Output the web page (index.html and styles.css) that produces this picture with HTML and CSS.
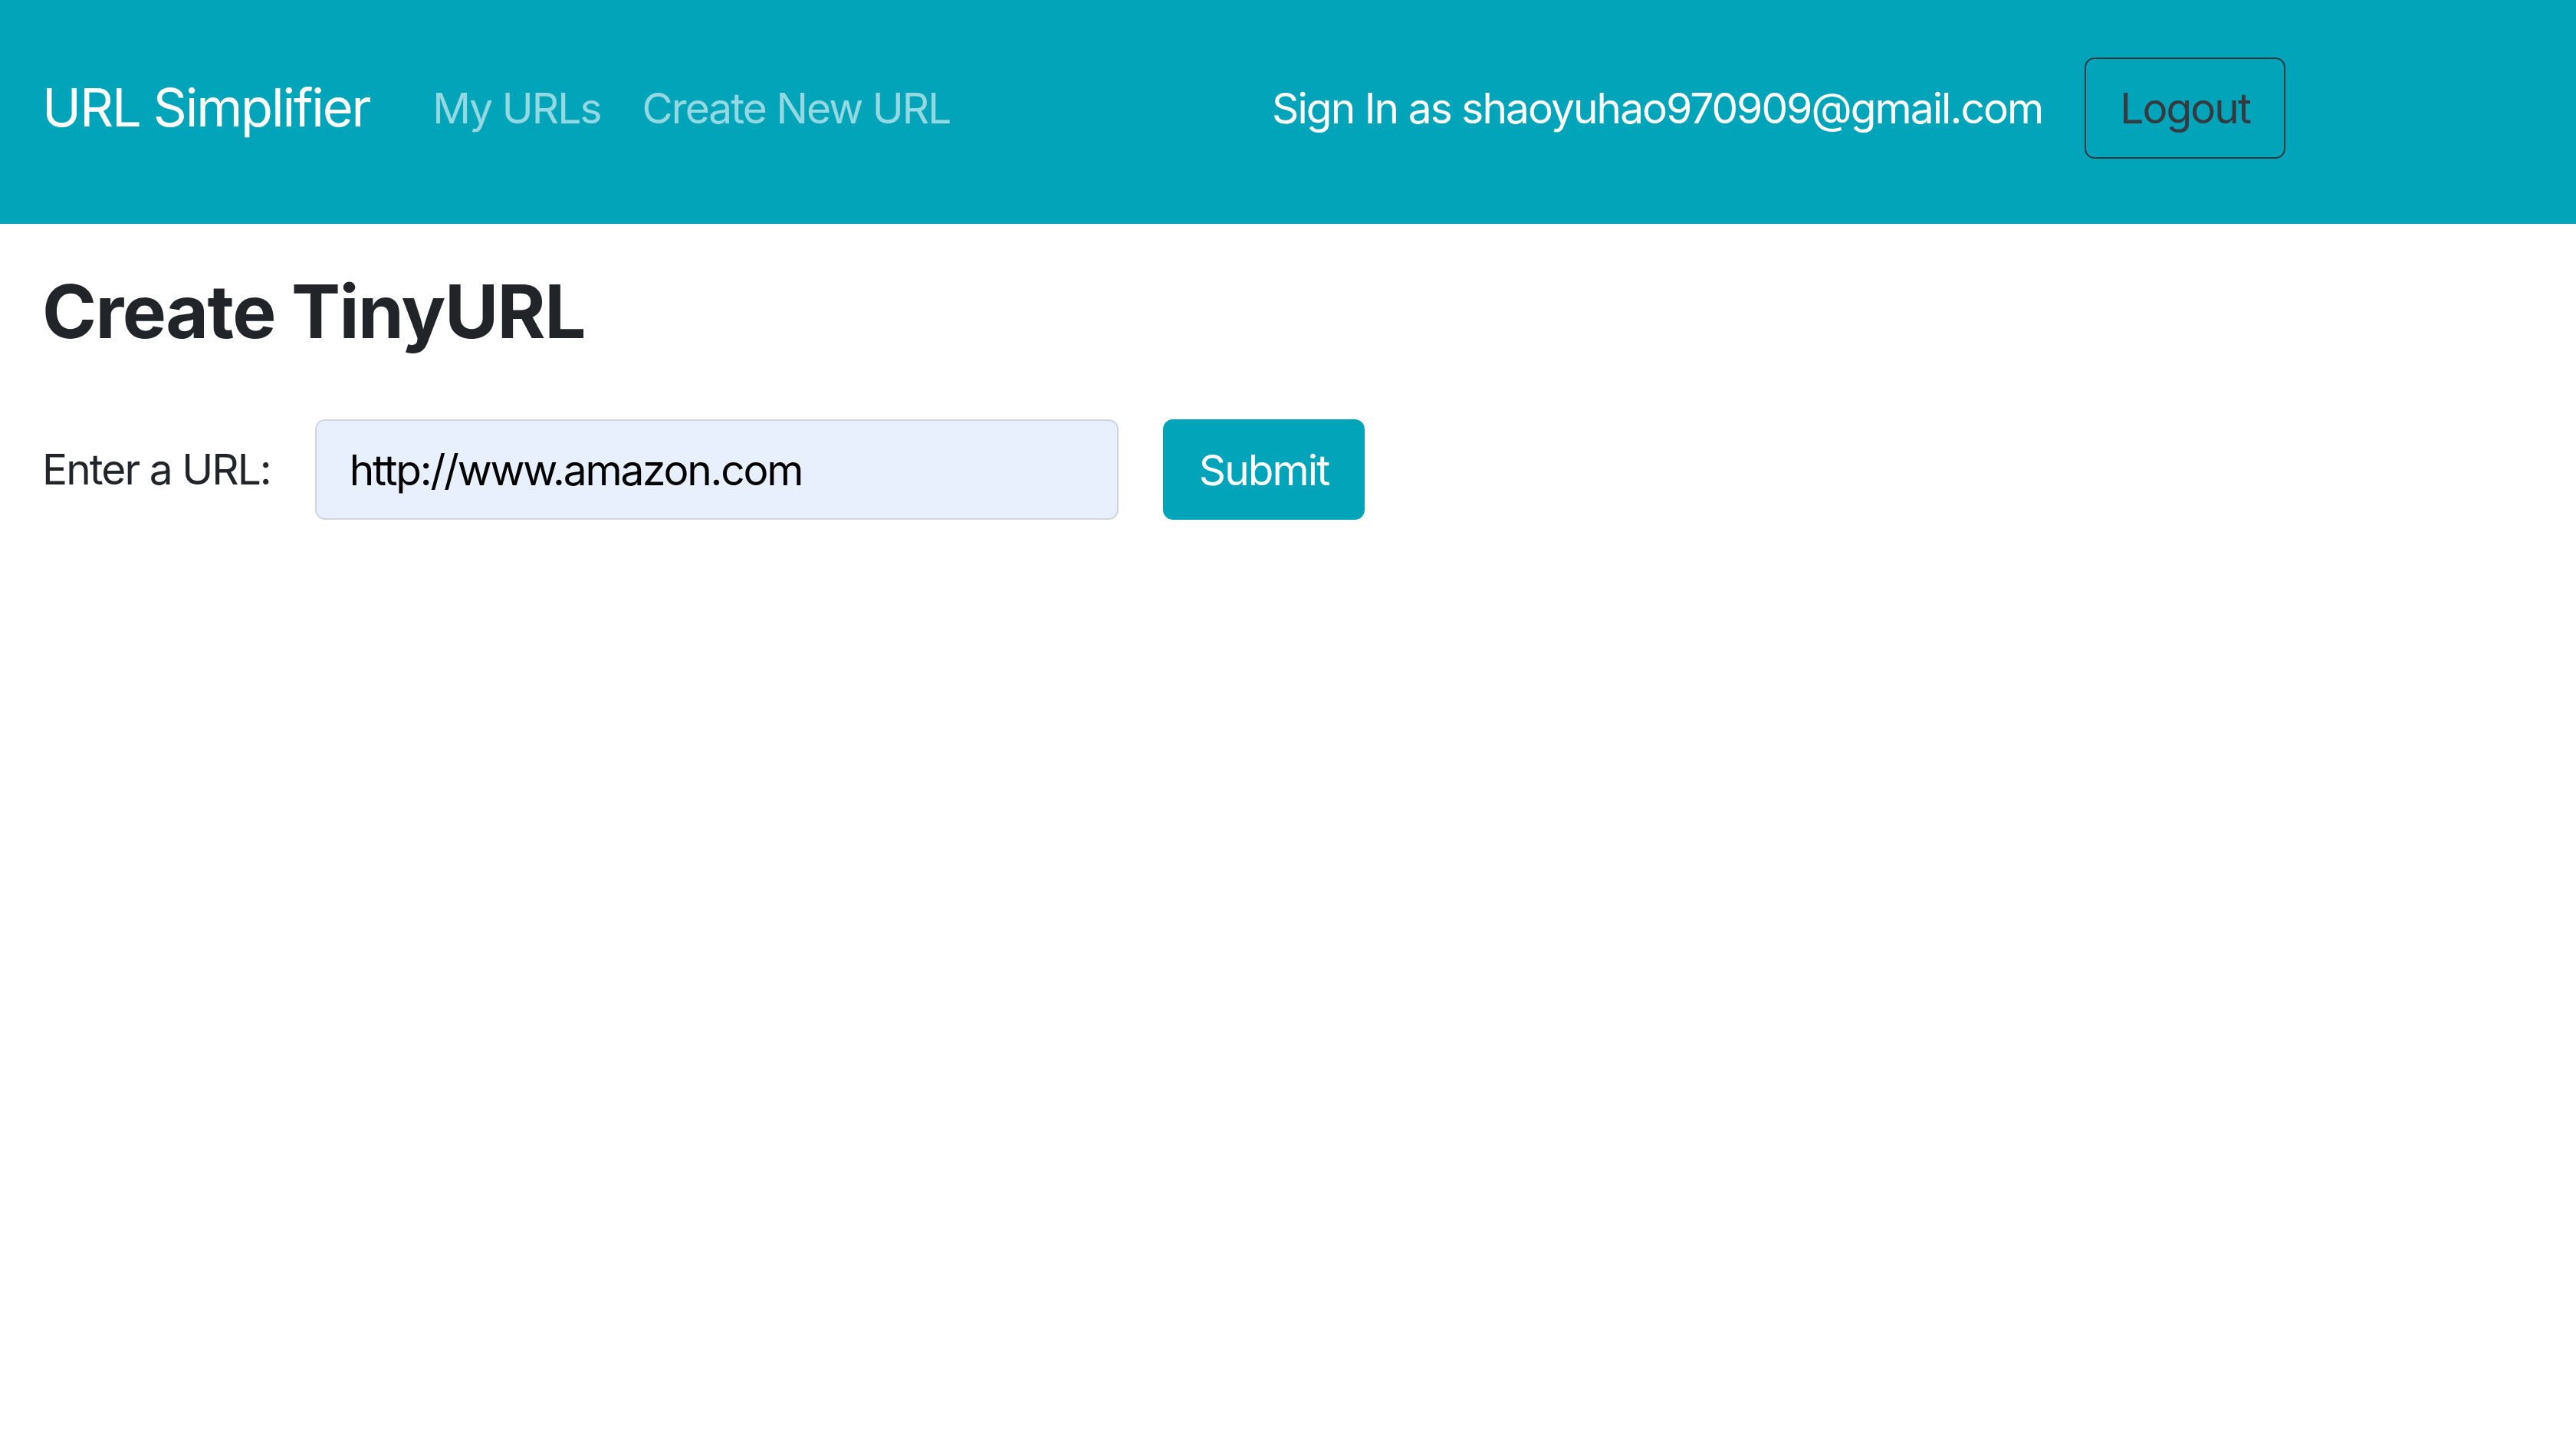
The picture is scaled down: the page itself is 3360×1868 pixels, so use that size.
FILE: index.html
```html
<!DOCTYPE html>
<html lang="en">
<head>
<meta charset="utf-8">
<title>URL Simplifier</title>
<link rel="stylesheet" href="styles.css">
</head>
<body>
<nav class="navbar">
  <a class="brand" href="#">URL Simplifier</a>
  <ul class="nav-links">
    <li><a class="nav-link" href="#">My URLs</a></li>
    <li><a class="nav-link" href="#">Create New URL</a></li>
  </ul>
  <div class="nav-right">
    <span class="signed-in">Sign In as shaoyuhao970909@gmail.com</span>
    <button class="btn-logout" type="button">Logout</button>
  </div>
</nav>
<main class="content">
  <h3 class="title">Create TinyURL</h3>
  <form class="url-form">
    <label class="url-label" for="url">Enter a URL:</label>
    <input class="url-input" id="url" type="text" value="http://www.amazon.com">
    <button class="btn-submit" type="submit">Submit</button>
  </form>
</main>
</body>
</html>
```

FILE: styles.css
```css
* {
  box-sizing: border-box;
}

html, body {
  margin: 0;
  padding: 0;
  background: #ffffff;
  font-family: Inter, "Liberation Sans", sans-serif;
  color: #212529;
}

.navbar {
  display: flex;
  align-items: center;
  height: 292px;
  padding: 0 379px 10px 55px;
  background: #02a4b9;
}

.brand {
  font-size: 68.6px;
  line-height: 1.5;
  letter-spacing: -0.031em;
  color: #ffffff;
  text-decoration: none;
  margin-right: 55px;
  white-space: nowrap;
}

.nav-links {
  display: flex;
  list-style: none;
  margin: 0;
  padding: 0;
}

.nav-link {
  display: block;
  padding: 0 27px;
  font-size: 55px;
  line-height: 1.5;
  letter-spacing: -0.035em;
  color: rgba(255, 255, 255, 0.58);
  text-decoration: none;
  white-space: nowrap;
}

.nav-right {
  display: flex;
  align-items: center;
  gap: 55px;
  margin-left: auto;
}

.signed-in {
  font-size: 55px;
  line-height: 1.5;
  letter-spacing: -0.035em;
  color: #ffffff;
  white-space: nowrap;
}

.btn-logout {
  font-family: inherit;
  font-size: 55px;
  letter-spacing: -0.035em;
  line-height: 84px;
  padding: 22px 44px;
  border: 2px solid #343a40;
  border-radius: 13px;
  background: transparent;
  color: #343a40;
}

.content {
  padding: 57px 55px 0;
}

.title {
  margin: 0 0 83px;
  font-size: 96px;
  line-height: 1.2;
  font-weight: 700;
  letter-spacing: -0.016em;
  color: #212529;
}

.url-form {
  display: flex;
  align-items: center;
}

.url-label {
  font-size: 55px;
  line-height: 1.5;
  letter-spacing: -0.035em;
  margin-right: 58px;
  color: #212529;
}

.url-input {
  width: 1048px;
  height: 131px;
  padding: 0 43px;
  font-family: inherit;
  font-size: 55px;
  letter-spacing: -0.04em;
  color: #000000;
  background: #e8f0fe;
  border: 2px solid #cfd6de;
  border-radius: 13px;
  outline: none;
}

.btn-submit {
  margin-left: 58px;
  height: 131px;
  padding: 0 45px;
  font-family: inherit;
  font-size: 55px;
  letter-spacing: -0.035em;
  color: #ffffff;
  background: #02a4b9;
  border: 2px solid #02a4b9;
  border-radius: 13px;
}
```
